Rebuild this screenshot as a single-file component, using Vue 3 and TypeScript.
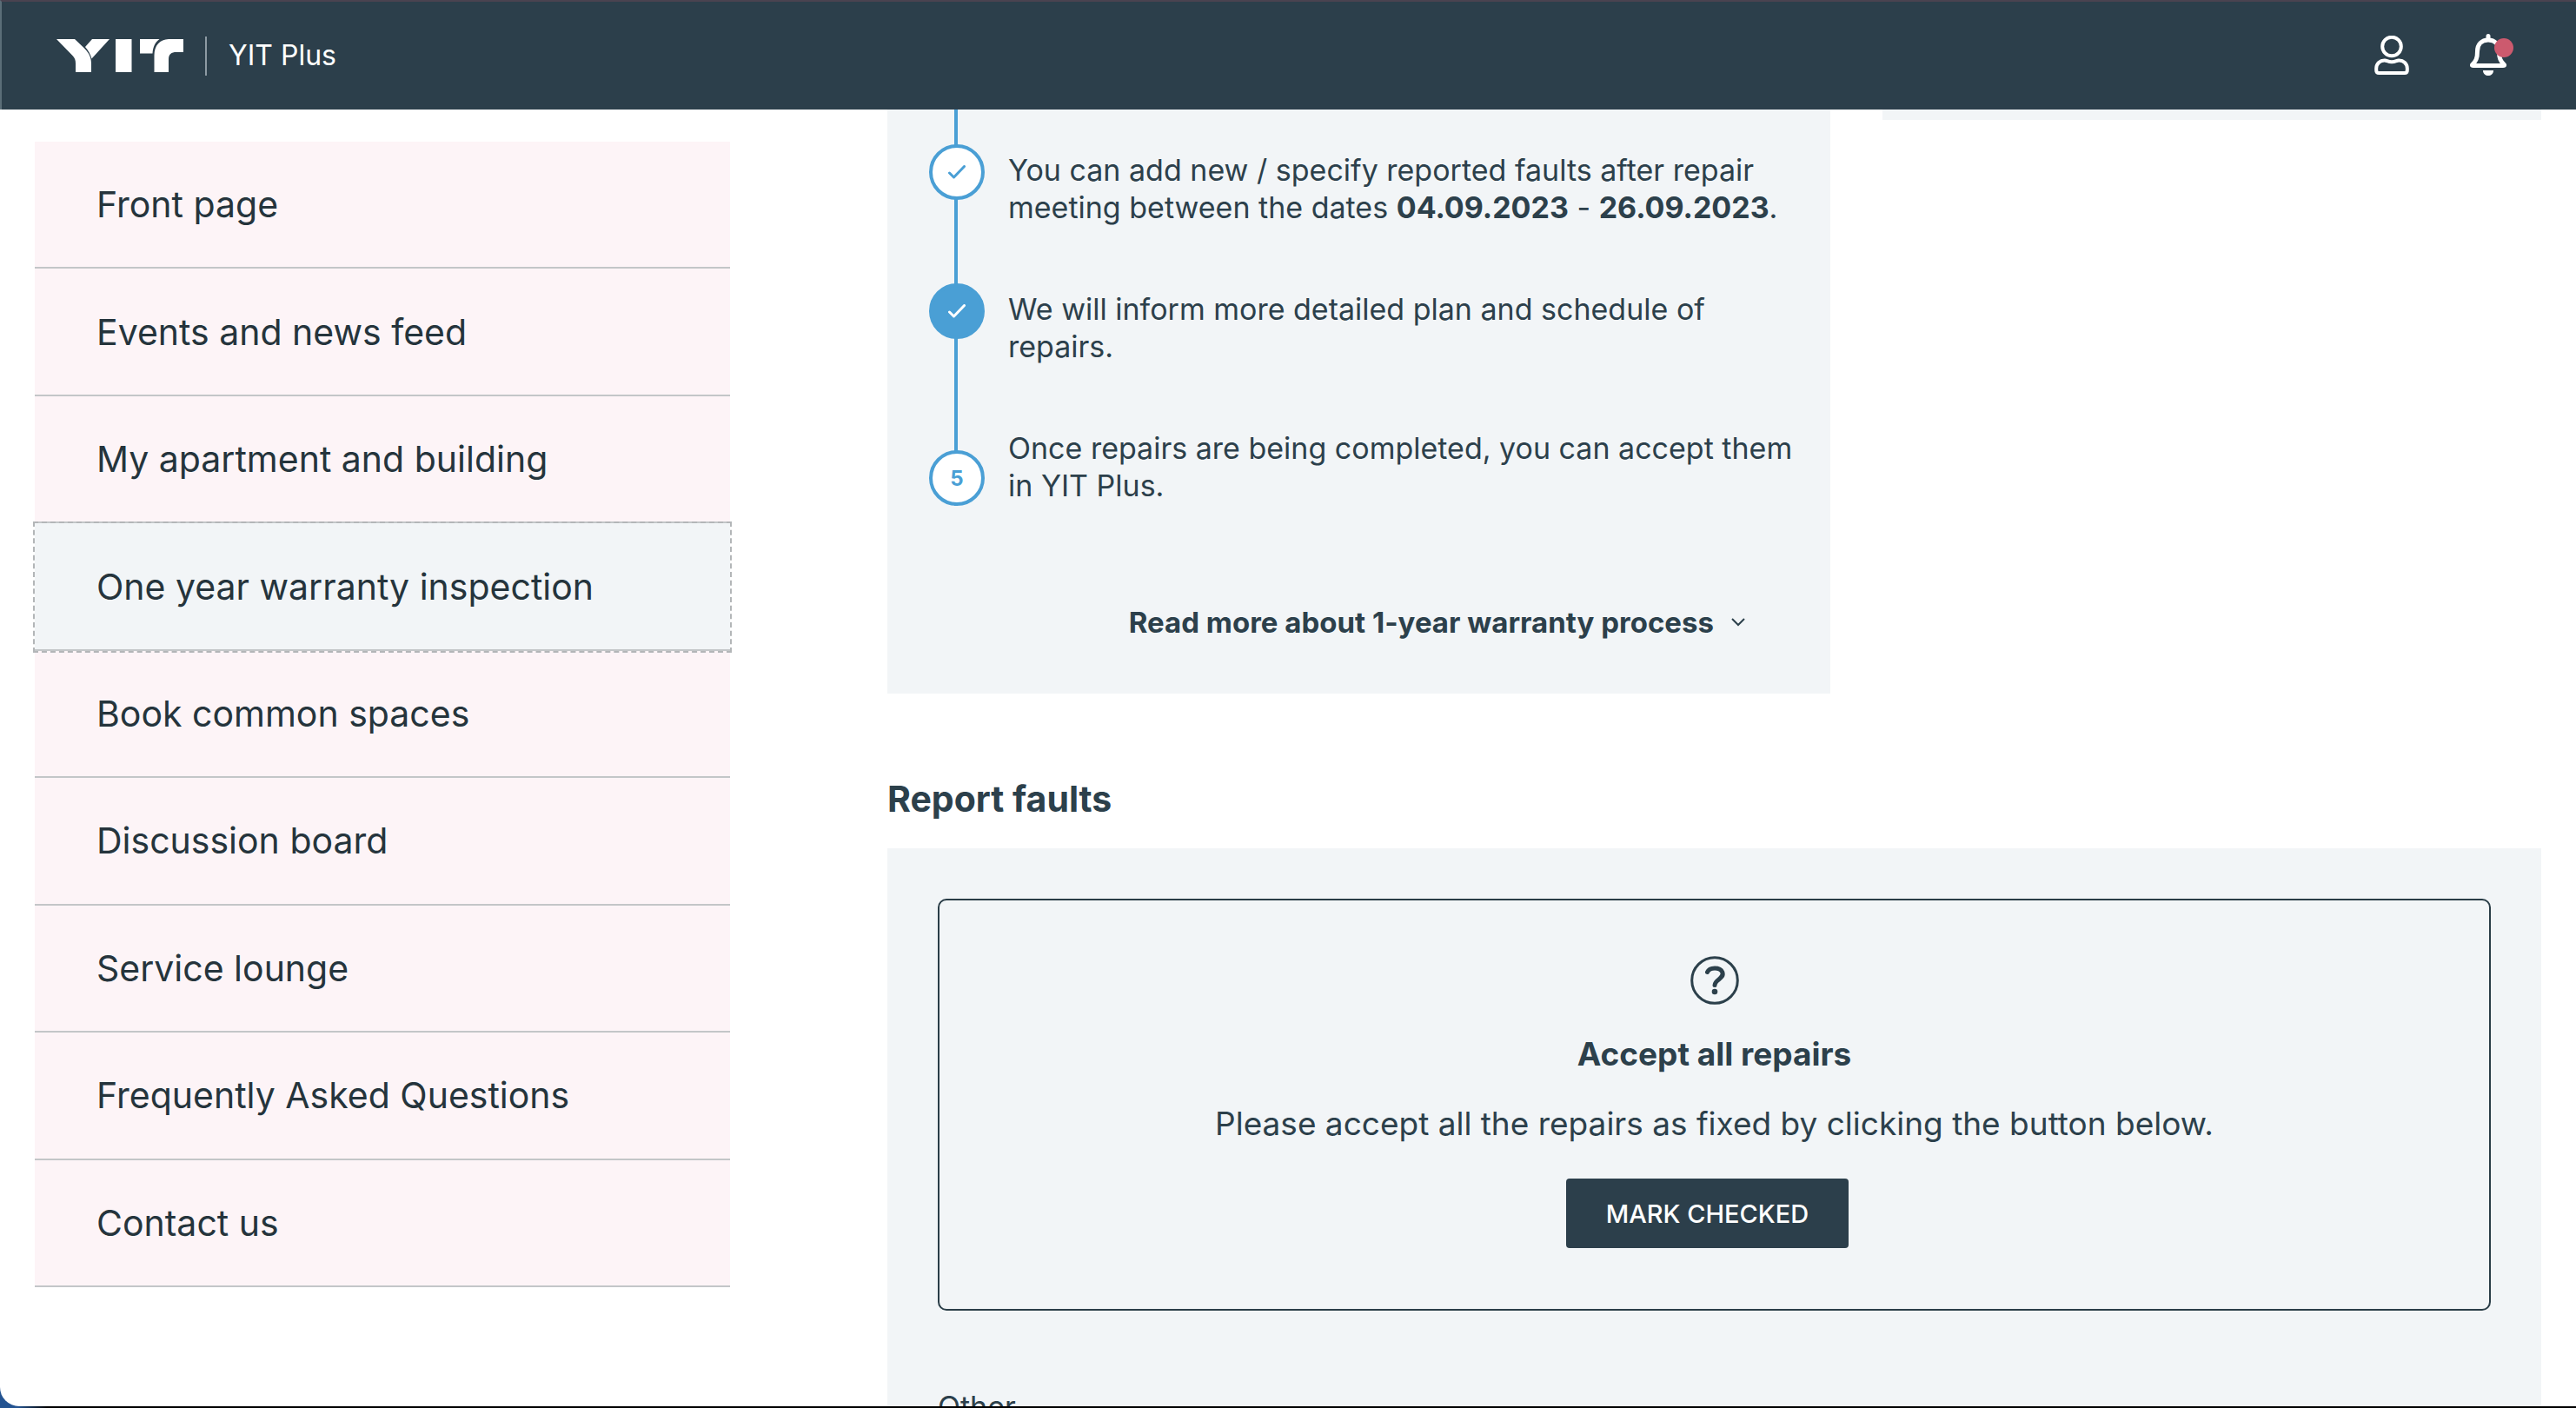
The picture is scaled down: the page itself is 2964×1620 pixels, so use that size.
<script setup lang="ts">
interface NavItem {
  label: string
  active?: boolean
}

interface Step {
  state: 'checked' | 'current' | 'upcoming'
  number: number
}

const navItems: NavItem[] = [
  { label: 'Front page' },
  { label: 'Events and news feed' },
  { label: 'My apartment and building' },
  { label: 'One year warranty inspection', active: true },
  { label: 'Book common spaces' },
  { label: 'Discussion board' },
  { label: 'Service lounge' },
  { label: 'Frequently Asked Questions' },
  { label: 'Contact us' },
]

const steps: Step[] = [
  { state: 'checked', number: 3 },
  { state: 'current', number: 4 },
  { state: 'upcoming', number: 5 },
]
</script>

<template>
  <div class="desktop">
    <div class="window">
      <header class="topbar">
        <a class="brand" href="#" aria-label="YIT Plus">
          <svg class="logo" viewBox="65 44 146 38" aria-hidden="true">
            <path d="M65 44H86L97 54.500C103 60.500 105 66 105 72V82H87V72C87 68 86 65.500 83.500 63Z" />
            <path d="M98 53L106 44H126L105.500 66.500C104 61 101.500 57 98 53Z" />
            <path d="M133 44H151.500V82H133Z" />
            <path d="M161 44H183.500C178.500 47.500 176 53 175.500 60.500H161Z" />
            <path d="M177.500 82V63C177.500 51 184 44.500 194 44H211V59H203C197 59 194 61.500 194 67V82Z" />
          </svg>
          <span class="divider"></span>
          <span class="product">YIT Plus</span>
        </a>
        <div class="actions">
          <button class="icon-button" type="button" aria-label="Profile">
            <svg class="person" viewBox="0 0 40 46" aria-hidden="true">
              <circle cx="20" cy="12.500" r="10.800" />
              <path d="M12 28.400C14.500 28.700 16 30.300 20 30.300S25.500 28.700 28 28.400C33.500 28.100 37.800 32.500 37.800 37.500V40Q37.800 43 34.800 43H5.200Q2.200 43 2.200 40V37.500C2.200 32.500 6.500 28.100 12 28.400Z" />
            </svg>
          </button>
          <button class="icon-button" type="button" aria-label="Notifications">
            <svg class="bell" viewBox="0 0 50 50" aria-hidden="true">
              <path class="bell-line" d="M21 2.500V7M21 7C13.500 7 8.500 12 8.500 20C8.500 30 6 31.500 2.700 35.500Q1.800 36.500 4 36.500H38Q40.200 36.500 39.300 35.500C36 31.500 33.500 30 33.500 20C33.500 12 28.500 7 21 7Z" />
              <path class="bell-clapper" d="M15 42H27C27 50 15 50 15 42Z" />
              <circle class="bell-dot" cx="39" cy="16" r="11" />
            </svg>
          </button>
        </div>
      </header>

      <div class="page">
        <nav class="sidebar">
          <a
            v-for="item in navItems"
            :key="item.label"
            class="nav-item"
            :class="{ active: item.active }"
            href="#"
          >{{ item.label }}</a>
        </nav>

        <main class="content">
          <div class="top-row">
            <section class="process">
              <ol class="steps">
                <li v-for="step in steps" :key="step.number" class="step" :class="step.state">
                  <span class="marker">
                    <span v-if="step.state === 'upcoming'">{{ step.number }}</span>
                    <svg v-else viewBox="0 0 20 16" aria-hidden="true">
                      <path d="M1.500 9L6.500 14L18.500 1.500" />
                    </svg>
                  </span>
                  <p v-if="step.number === 3">
                    You can add new / specify reported faults after repair<br />
                    meeting between the dates <strong>04.09.2023</strong> - <strong>26.09.2023</strong>.
                  </p>
                  <p v-else-if="step.number === 4">
                    We will inform more detailed plan and schedule of<br />
                    repairs.
                  </p>
                  <p v-else>
                    Once repairs are being completed, you can accept them<br />
                    in YIT Plus.
                  </p>
                </li>
              </ol>
              <button class="read-more" type="button">
                Read more about 1-year warranty process
                <svg viewBox="0 0 16 10" aria-hidden="true"><path d="M1 1L8 8L15 1" /></svg>
              </button>
            </section>
            <aside class="side-card"></aside>
          </div>

          <h2>Report faults</h2>
          <section class="faults">
            <div class="accept">
              <svg class="question" viewBox="0 0 56 56" aria-hidden="true">
                <circle class="ring" cx="28" cy="28" r="26.300" />
                <path class="hook" d="M19.500 18.500C22 12.500 34 12.500 36.800 18.500C39.500 26 28 27 28 33.500" />
                <circle class="point" cx="28" cy="41" r="3.300" />
              </svg>
              <h3>Accept all repairs</h3>
              <p>Please accept all the repairs as fixed by clicking the button below.</p>
              <button class="mark" type="button">MARK CHECKED</button>
            </div>
            <p class="category">Other</p>
          </section>
        </main>
      </div>
    </div>
  </div>
</template>

<style>
body {
  margin: 0;
}
</style>

<style scoped>
.desktop {
  height: 100vh;
  box-sizing: border-box;
  padding-bottom: 2px;
  background: linear-gradient(to right, #235391 0, #235391 20px, #000 54px);
  font-family: Inter, "Liberation Sans", sans-serif;
  color: #2c404b;
}

.window {
  height: 100%;
  overflow: hidden;
  background: #fff;
  border-bottom-left-radius: 22px;
}

.topbar {
  display: flex;
  align-items: center;
  justify-content: space-between;
  height: 126px;
  box-sizing: border-box;
  padding: 0 72px 0 63px;
  border-top: 2px solid #4a4350;
  border-left: 2px solid #5b6e78;
  background: #2c3f4b;
}

.brand {
  display: flex;
  align-items: center;
  color: #fff;
  text-decoration: none;
}

.logo {
  width: 146px;
  height: 38px;
  fill: #fff;
}

.divider {
  width: 2px;
  height: 45px;
  margin: 0 25px;
  background: #8d9aa3;
}

.product {
  font-size: 32px;
  line-height: 40px;
}

.actions {
  display: flex;
  align-items: center;
  gap: 70px;
}

.icon-button {
  display: flex;
  padding: 0;
  border: 0;
  background: none;
}

.person {
  width: 40px;
  height: 46px;
  fill: none;
  stroke: #fff;
  stroke-width: 4;
}

.bell {
  width: 50px;
  height: 50px;
}

.bell-line {
  fill: none;
  stroke: #fff;
  stroke-width: 5;
  stroke-linecap: round;
  stroke-linejoin: round;
}

.bell-clapper {
  fill: #fff;
}

.bell-dot {
  fill: #cc5a6e;
}

.page {
  display: grid;
  grid-template-columns: minmax(0, 800fr) minmax(0, 1903fr);
  column-gap: 181px;
  align-items: start;
  padding: 0 40px;
}

.sidebar {
  display: grid;
  grid-auto-rows: 1fr;
  min-height: 1318px;
  margin-top: 37px;
}

.nav-item {
  display: flex;
  align-items: center;
  padding: 0 0 0 71px;
  border-bottom: 2px solid #c3c6c8;
  background: #fdf4f7;
  color: #25343c;
  font-size: 41px;
  line-height: 48px;
  text-decoration: none;
}

.nav-item.active {
  position: relative;
  z-index: 1;
  background: #f2f5f7;
  outline: 2px dashed #b3b6b8;
}

.top-row {
  display: grid;
  grid-template-columns: minmax(0, 1085fr) minmax(0, 758fr);
  column-gap: 60px;
  align-items: start;
}

.process {
  display: flex;
  flex-direction: column;
  padding: 40px 48px 48px;
  background: #f2f5f7;
}

.steps {
  margin: 0;
  padding: 0;
  list-style: none;
}

.step {
  position: relative;
  display: flex;
  align-items: flex-start;
  gap: 27px;
  padding-bottom: 64px;
}

.step::before {
  content: "";
  position: absolute;
  top: 0;
  bottom: 0;
  left: 29px;
  width: 4px;
  background: #4a9fd5;
}

.step.checked::before {
  top: -40px;
}

.step.upcoming {
  align-items: flex-end;
  padding-bottom: 0;
}

.marker {
  position: relative;
  display: flex;
  flex: none;
  align-items: center;
  justify-content: center;
  width: 64px;
  height: 64px;
  box-sizing: border-box;
  border: 4px solid #4a9fd5;
  border-radius: 50%;
  background: #fff;
  color: #4a9fd5;
  font-size: 24px;
  font-weight: 700;
}

.marker svg {
  width: 20px;
  height: 16px;
  fill: none;
  stroke: #4a9fd5;
  stroke-width: 3;
  stroke-linecap: round;
  stroke-linejoin: round;
}

.current .marker {
  background: #4a9fd5;
}

.current .marker svg {
  stroke: #fff;
}

.step p {
  margin: 0;
  padding: 8px 0 2px;
  font-size: 34px;
  line-height: 43px;
  white-space: nowrap;
}

.read-more {
  display: flex;
  align-items: center;
  align-self: flex-end;
  gap: 20px;
  margin: 100px 50px 0 0;
  padding: 0;
  border: 0;
  background: none;
  color: inherit;
  font-family: inherit;
  font-size: 33px;
  font-weight: 700;
  line-height: 68px;
}

.read-more svg {
  width: 16px;
  height: 10px;
  fill: none;
  stroke: #2c404b;
  stroke-width: 2;
}

.side-card {
  height: 12px;
  background: #f2f5f7;
}

h2 {
  margin: 96px 0 32px;
  font-size: 41px;
  font-weight: 700;
  line-height: 50px;
}

.faults {
  padding: 58px;
  background: #f2f5f7;
}

.accept {
  display: flex;
  flex-direction: column;
  align-items: center;
  padding: 64px 40px 70px;
  border: 2px solid #2a3d47;
  border-radius: 10px;
}

.question {
  width: 56px;
  height: 56px;
  fill: none;
  stroke: #2c404b;
}

.ring {
  stroke-width: 3;
}

.hook {
  stroke-width: 5;
  stroke-linecap: round;
}

.point {
  fill: #2c404b;
  stroke: none;
}

.accept h3 {
  margin: 32px 0 0;
  font-size: 37px;
  font-weight: 700;
  line-height: 50px;
}

.accept p {
  margin: 30px 0 0;
  font-size: 37px;
  line-height: 50px;
}

.mark {
  height: 80px;
  margin: 38px 16px 0 0;
  padding: 0 46px;
  border: 0;
  border-radius: 4px;
  background: #2c3f4b;
  color: #fff;
  font-family: inherit;
  font-size: 29px;
  font-weight: 500;
}

.category {
  margin: 86px 0 0;
  font-size: 34px;
  line-height: 50px;
}
</style>
